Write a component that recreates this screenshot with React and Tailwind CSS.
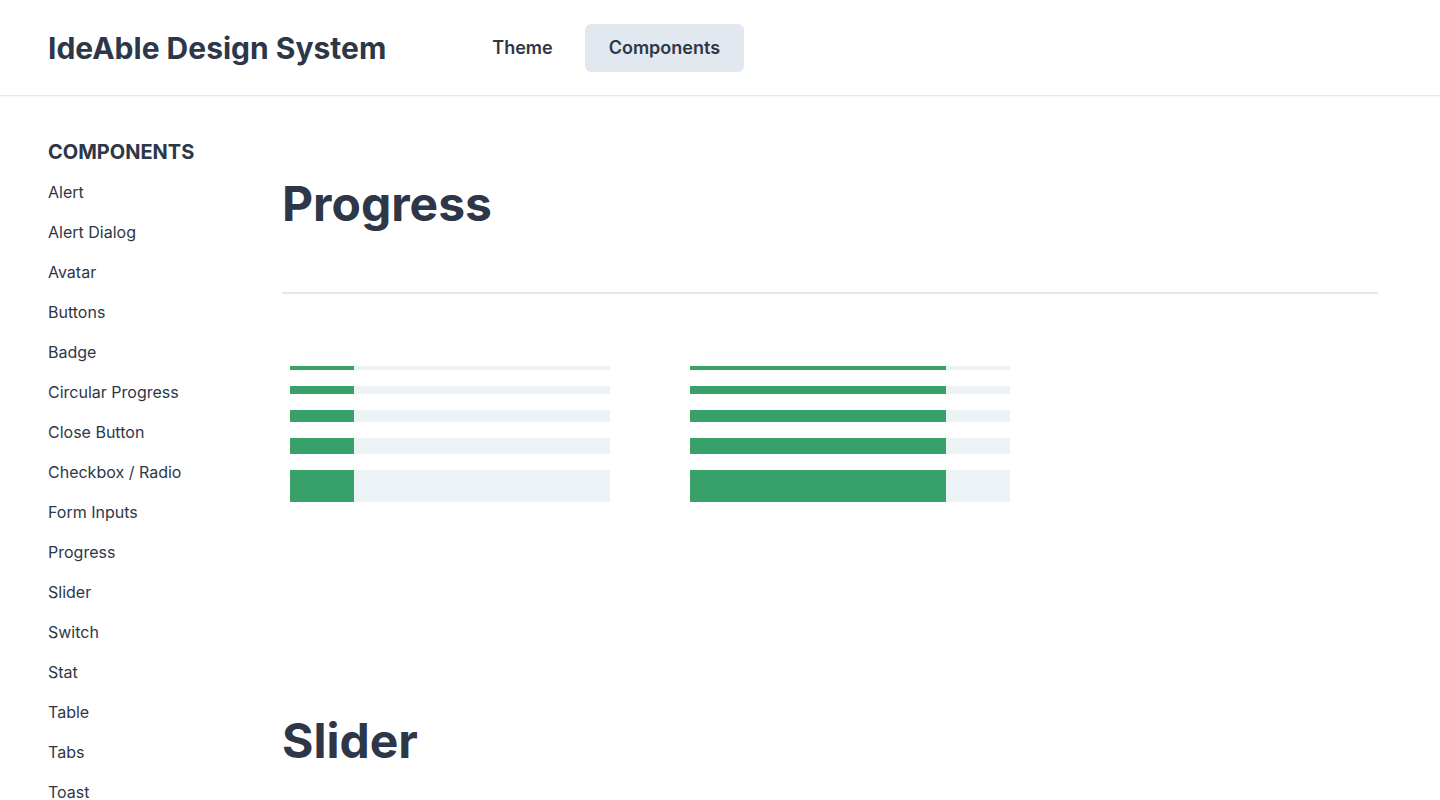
import React from "react";

const NAV_ITEMS = [
  "Alert",
  "Alert Dialog",
  "Avatar",
  "Buttons",
  "Badge",
  "Circular Progress",
  "Close Button",
  "Checkbox / Radio",
  "Form Inputs",
  "Progress",
  "Slider",
  "Switch",
  "Stat",
  "Table",
  "Tabs",
  "Toast",
];

const SIZES = ["h-1", "h-2", "h-3", "h-4", "h-8"];

const ProgressBar = ({ size, value }) => (
  <div className={`w-full bg-[#EDF2F7] overflow-hidden ${size}`}>
    <div className="h-full bg-[#38A169]" style={{ width: `${value}%` }} />
  </div>
);

const App = () => {
  return (
    <div className="min-h-screen bg-white text-[#2D3748] font-['Inter',sans-serif]">
      <header className="h-24 flex items-center px-12 border-b border-[#E2E8F0] shadow-[0_1px_2px_rgba(0,0,0,0.04)]">
        <h1 className="text-3xl font-bold">IdeAble Design System</h1>
        <nav className="flex items-center ml-[82px] gap-2">
          <button className="h-12 px-6 rounded-md text-lg font-semibold">Theme</button>
          <button className="h-12 px-6 rounded-md text-lg font-semibold bg-[#E2E8F0]">Components</button>
        </nav>
      </header>

      <div className="flex">
        <aside className="w-[282px] shrink-0 pl-12 pt-[42px]">
          <h2 className="text-xl font-bold leading-7 mb-[6px]">COMPONENTS</h2>
          <ul>
            {NAV_ITEMS.map((item) => (
              <li key={item} className="py-2 text-base leading-6">
                {item}
              </li>
            ))}
          </ul>
        </aside>

        <main className="flex-1 pr-[62px] pt-[84px]">
          <section>
            <h2 className="text-5xl leading-none font-bold">Progress</h2>
            <hr className="mt-16 border-t-2 border-[#E2E8F0]" />
            <div className="pt-[72px] pl-2 flex gap-20">
              {[20, 80].map((value) => (
                <div key={value} className="w-[320px] flex flex-col gap-4">
                  {SIZES.map((size) => (
                    <ProgressBar key={size} size={size} value={value} />
                  ))}
                </div>
              ))}
            </div>
          </section>

          <section className="pt-[215px]">
            <h2 className="text-5xl leading-none font-bold">Slider</h2>
          </section>
        </main>
      </div>
    </div>
  );
};

export default App;
